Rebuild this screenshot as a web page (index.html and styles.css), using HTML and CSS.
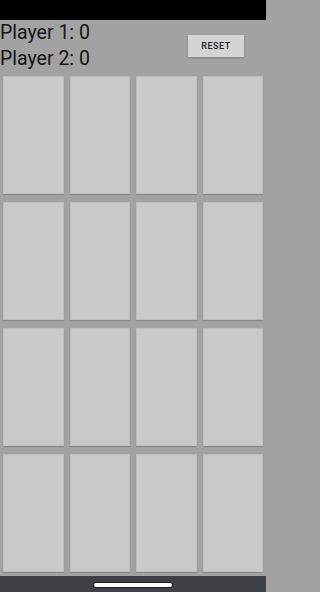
FILE: index.html
```html
<!DOCTYPE html>
<html>
<head>
<meta charset="utf-8">
<link rel="stylesheet" href="styles.css">
</head>
<body>
<div class="app">
  <div class="status"></div>
  <div class="header">
    <div class="scores">
      <div class="score">Player 1: 0</div>
      <div class="score">Player 2: 0</div>
    </div>
    <button class="reset">RESET</button>
  </div>
  <div class="grid">
    <div class="card"></div><div class="card"></div><div class="card"></div><div class="card"></div>
    <div class="card"></div><div class="card"></div><div class="card"></div><div class="card"></div>
    <div class="card"></div><div class="card"></div><div class="card"></div><div class="card"></div>
    <div class="card"></div><div class="card"></div><div class="card"></div><div class="card"></div>
  </div>
  <div class="navbar"><div class="pill"></div></div>
</div>
</body>
</html>
```
FILE: styles.css
```css
html, body {
  margin: 0;
  padding: 0;
  height: 592px;
  overflow: hidden;
  background: #a2a2a2;
  font-family: Roboto, "Liberation Sans", sans-serif;
}
.app {
  display: flex;
  flex-direction: column;
  width: 266px;
  height: 592px;
}
.status {
  height: 20px;
  background: #000;
  flex: none;
}
.header {
  height: 52px;
  display: flex;
  align-items: center;
  justify-content: space-between;
  flex: none;
}
.score {
  font-size: 19.5px;
  line-height: 26px;
  color: #151515;
}
.reset {
  width: 56px;
  height: 22px;
  margin-right: 22px;
  border: none;
  background: #d4d4d4;
  box-shadow: 0 1px 2px rgba(0,0,0,0.25);
  font-family: Roboto, "Liberation Sans", sans-serif;
  font-weight: 500;
  font-size: 9px;
  letter-spacing: 0.5px;
  color: #222;
  padding: 0;
}
.grid {
  height: 504px;
  display: grid;
  grid-template-columns: repeat(4, 1fr);
  grid-template-rows: repeat(4, 1fr);
  flex: none;
}
.card {
  margin: 4px 3px;
  background: #c9c9c9;
  border: 1px solid #bdbdbd;
  box-shadow: 0 1px 1px rgba(0,0,0,0.15);
}
.navbar {
  flex: 1;
  background: #3d4146;
  display: flex;
  justify-content: center;
  align-items: center;
}
.pill {
  width: 78px;
  height: 4px;
  border-radius: 2px;
  background: #fff;
  box-shadow: 0 0 0 1px #1e2124;
  margin-top: 1px;
}
```
